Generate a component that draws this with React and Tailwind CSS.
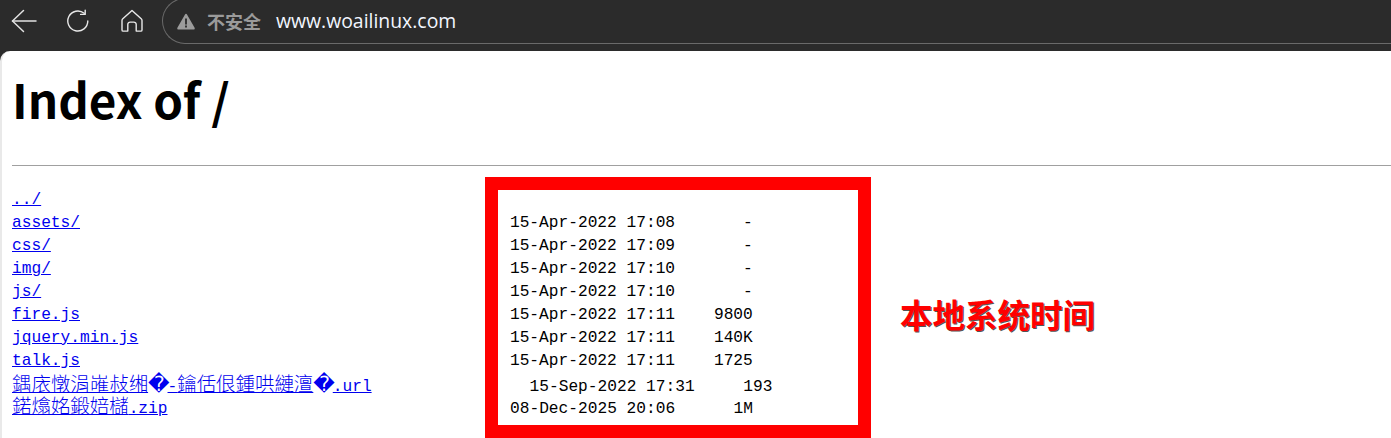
function Cjk({ children }) {
  return <span className="font-['Noto_Sans_CJK_TC','Noto_Sans_CJK_SC',serif] text-[19.44px] leading-none font-light">{children}</span>;
}
function Bad() {
  return <span className="inline-block w-[19.44px] text-center font-['DejaVu_Sans',sans-serif] text-[21px] leading-none">{"\uFFFD"}</span>;
}

const L = "text-[#0000ee] underline";

const rows = [
  { link: "../" },
  { link: "assets/", pad: 44, rest: "15-Apr-2022 17:08       -" },
  { link: "css/", pad: 47, rest: "15-Apr-2022 17:09       -" },
  { link: "img/", pad: 47, rest: "15-Apr-2022 17:10       -" },
  { link: "js/", pad: 48, rest: "15-Apr-2022 17:10       -" },
  { link: "fire.js", pad: 44, rest: "15-Apr-2022 17:11    9800" },
  { link: "jquery.min.js", pad: 38, rest: "15-Apr-2022 17:11    140K" },
  { link: "talk.js", pad: 44, rest: "15-Apr-2022 17:11    1725" },
];

function Rest({ pad, children }) {
  return <span className="ml-[2.5px]">{" ".repeat(pad)}{children}</span>;
}

export default function App() {
  return (
    <div className="relative h-[438px] w-[1391px] overflow-hidden bg-[#2b2b2b]">
      <header className="flex h-[51px] items-start text-[#e6e6e6]">
        <div className="flex h-[42px] w-[162px] shrink-0 items-center">
          <svg width="26" height="24" viewBox="0 0 26 24" className="ml-[11px]" fill="none" stroke="#e2e2e2" strokeWidth="1.5" strokeLinecap="round" strokeLinejoin="round">
            <path d="M1.5 12H25" />
            <path d="M12.5 1.5L1.5 12l11 10.5" />
          </svg>
          <svg width="24" height="24" viewBox="0 0 24 24" className="ml-[29px]" fill="none" stroke="#e8e8e8" strokeWidth="1.4" strokeLinecap="round" strokeLinejoin="round">
            <path d="M21.8 12a10 10 0 1 1-3.6-7.7" />
            <path d="M19.2 1.2v4.2h-4.6" />
          </svg>
          <svg width="24" height="24" viewBox="0 0 24 24" className="ml-[30px]" fill="none" stroke="#e8e8e8" strokeWidth="1.4" strokeLinejoin="round">
            <path d="M12 1.5l9.2 8.2a2.4 2.4 0 0 1 .8 1.8v9.4a1.2 1.2 0 0 1-1.2 1.2h-4.6v-6.6a2.4 2.4 0 0 0-2.4-2.4h-3.6a2.4 2.4 0 0 0-2.4 2.4v6.6H3.2A1.2 1.2 0 0 1 2 20.9v-9.4a2.4 2.4 0 0 1 .8-1.8z" />
          </svg>
        </div>
        <div className="-mt-[2px] flex h-[46px] flex-1 items-center rounded-l-[23px] border border-r-0 border-[#6a6a6a] pl-[14px]">
          <svg width="18" height="17" viewBox="0 0 18 17" className="shrink-0">
            <path d="M9 .8a1.2 1.2 0 0 1 1 .6l7.6 13.4a1.1 1.1 0 0 1-1 1.7H1.4a1.1 1.1 0 0 1-1-1.7L8 1.4a1.2 1.2 0 0 1 1-.6z" fill="#9c9c9c" />
            <path d="M8.1 5.4h1.8v6H8.1zM8.1 12.6h1.8v1.9H8.1z" fill="#2b2b2b" />
          </svg>
          <span className="ml-[12px] font-['Noto_Sans_CJK_SC',sans-serif] text-[18px] leading-none font-bold text-[#9a9a9a]">不安全</span>
          <span className="ml-[15px] font-['Open_Sans',sans-serif] text-[19.4px] leading-none text-[#f2f6ff]">www.woailinux.com</span>
        </div>
      </header>

      <main className="h-[387px] rounded-tl-[10px] border-l-2 border-[#e9e9e9] bg-white pl-[10px] text-black">
        <h1 className="pt-[16px] font-['Noto_Sans_CJK_SC',sans-serif] text-[47.6px] leading-[64px] font-bold">Index of /</h1>
        <hr className="mt-[34px] border-t border-[#a0a0a0]" />
        <pre className="mt-[23px] font-['Liberation_Mono',monospace] text-[16.2px] leading-[23px]">
          {rows.map((r) => (
            <div key={r.link} className="h-[23px]">
              <a className={L}>{r.link}</a>
              {r.rest && <Rest pad={r.pad}>{r.rest}</Rest>}
            </div>
          ))}
          <div className="h-[22px]">
            <a className={L}><Cjk>鍝庡憞涓嶉敊缃</Cjk><Bad />-<Cjk>鑰佸佷鍾哄縺澶</Cjk><Bad />.url</a>
            <Rest pad={16}>15-Sep-2022 17:31     193</Rest>
          </div>
          <div className="h-[23px]">
            <a className={L}><Cjk>鍩熻姳鍛婄櫧</Cjk>.zip</a>
            <Rest pad={35}>08-Dec-2025 20:06      1M</Rest>
          </div>
        </pre>
      </main>

      <div className="absolute top-[177px] left-[485px] h-[261px] w-[386px] border-[13px] border-[#ff0000]" />
      <div className="absolute top-[296px] left-[900px] font-['Noto_Sans_CJK_SC',serif] text-[32.5px] leading-[36px] font-bold whitespace-nowrap text-[#ff0000] [text-shadow:1px_1px_0_#555]">
        本地系统时间
      </div>
    </div>
  );
}
